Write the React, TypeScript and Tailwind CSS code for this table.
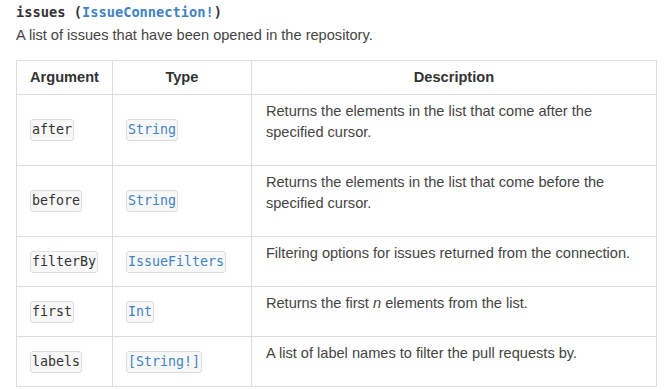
const rows = [
  { name: 'after', type: 'String', desc: <>Returns the elements in the list that come after the specified cursor.</> },
  { name: 'before', type: 'String', desc: <>Returns the elements in the list that come before the specified cursor.</> },
  { name: 'filterBy', type: 'IssueFilters', desc: <>Filtering options for issues returned from the connection.</> },
  { name: 'first', type: 'Int', desc: <>Returns the first <em>n</em> elements from the list.</> },
  { name: 'labels', type: '[String!]', desc: <>A list of label names to filter the pull requests by.</> },
];

const mono = "font-['DejaVu_Sans_Mono',monospace]";

const Code = ({ children, link }: { children: React.ReactNode; link?: boolean }) => (
  <code
    className={`${mono} inline-block align-middle text-[13.3px] leading-[20px] px-[1px] bg-[#f8f8f8] border border-[#dddddd] rounded-[3px] ${
      link ? 'text-[#4183c4]' : 'text-[#333333]'
    }`}
  >
    {children}
  </code>
);

export default function App() {
  return (
    <div className="w-[671px] h-[390px] overflow-hidden bg-white px-4 font-['Liberation_Sans',Arial,sans-serif] text-[#333333]">
      <h4 className={`${mono} font-bold text-[13.7px] leading-[24px] text-[#333333]`}>
        issues (<span className="text-[#4183c4]">IssueConnection!</span>)
      </h4>
      <p className="text-[14.6px] leading-[22px] text-[#444444]">
        A list of issues that have been opened in the repository.
      </p>

      <table className="mt-[14px] w-[641px] border-collapse text-[14.6px]">
        <thead>
          <tr>
            <th className="w-[94px] h-[34px] border border-[#dddddd] px-[13px] font-bold text-center text-[#333333]">Argument</th>
            <th className="w-[139px] border border-[#dddddd] px-[13px] font-bold text-center text-[#333333]">Type</th>
            <th className="border border-[#dddddd] px-[13px] font-bold text-center text-[#333333]">Description</th>
          </tr>
        </thead>
        <tbody>
          {rows.map((row) => (
            <tr key={row.name}>
              <td className="border border-[#dddddd] px-[13px] py-[6px] align-middle">
                <Code>{row.name}</Code>
              </td>
              <td className="border border-[#dddddd] px-[13px] py-[6px] align-middle">
                <Code link>{row.type}</Code>
              </td>
              <td className="border border-[#dddddd] px-[14px] py-[6px] align-middle text-[#444444]">
                <p className="leading-[21px] mb-[16px]">{row.desc}</p>
              </td>
            </tr>
          ))}
        </tbody>
      </table>
    </div>
  );
}
